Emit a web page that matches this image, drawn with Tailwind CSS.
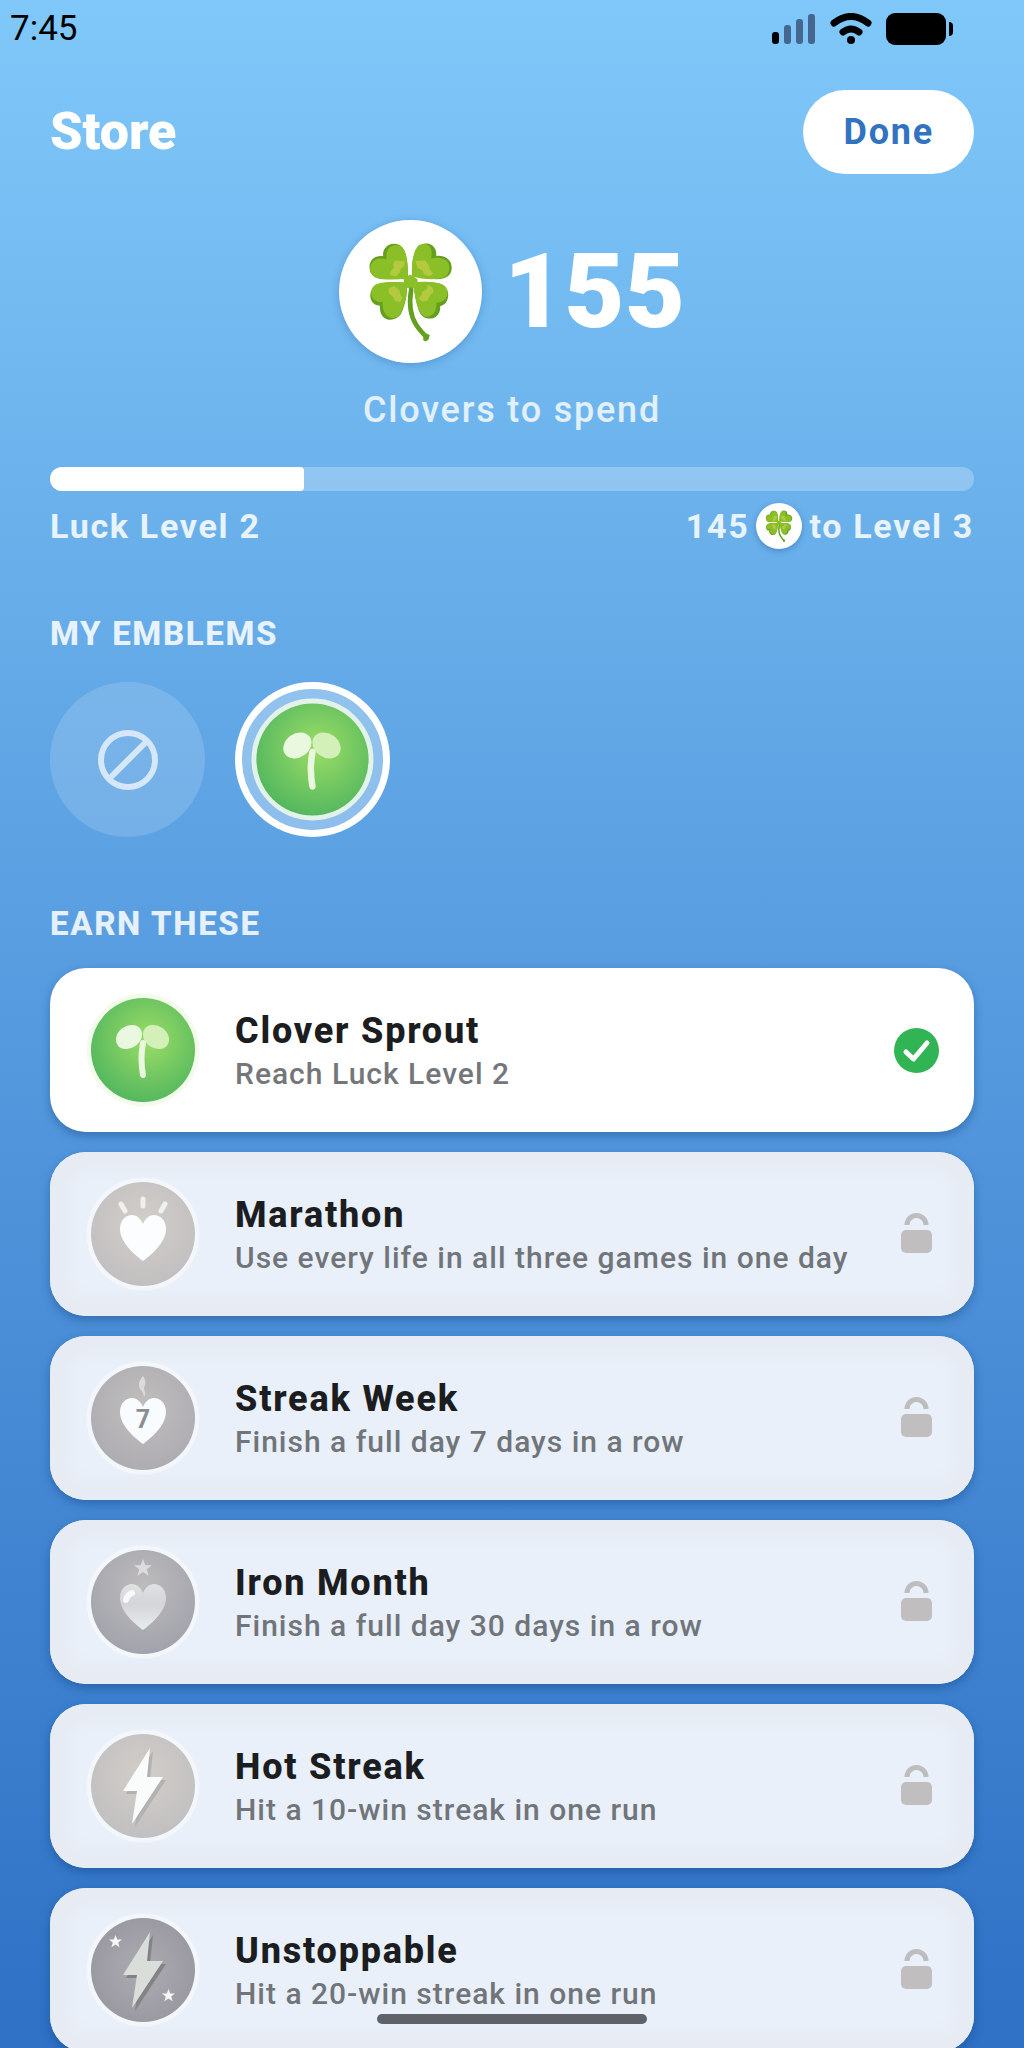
<!DOCTYPE html>
<html lang="en">
<head>
  <meta charset="UTF-8">
  <meta name="viewport" content="width=device-width, initial-scale=1">
  <title>Store</title>
  <script src="https://cdn.jsdelivr.net/npm/@tailwindcss/browser@4"></script>
</head>
<body class="h-screen overflow-hidden bg-linear-to-b from-[#80c8f9] via-[#559ade] to-[#2e71c5] font-['Roboto',sans-serif]">

  <!-- Shared icons -->
  <svg class="absolute size-0" aria-hidden="true">
    <defs>
      <radialGradient id="green" cx="0.55" cy="0.4" r="0.6">
        <stop offset="0" stop-color="#9cdd66"/><stop offset="1" stop-color="#55b85e"/>
      </radialGradient>
      <radialGradient id="sand" cx="0.5" cy="0.4" r="0.6">
        <stop offset="0" stop-color="#d2cfc9"/><stop offset="1" stop-color="#c1bfc0"/>
      </radialGradient>
      <radialGradient id="stone" cx="0.5" cy="0.4" r="0.6">
        <stop offset="0" stop-color="#c2bebd"/><stop offset="1" stop-color="#adacb1"/>
      </radialGradient>
      <radialGradient id="iron" cx="0.5" cy="0.35" r="0.65">
        <stop offset="0" stop-color="#bdbbbb"/><stop offset="1" stop-color="#a1a3ac"/>
      </radialGradient>
      <radialGradient id="slate" cx="0.5" cy="0.5" r="0.6">
        <stop offset="0" stop-color="#aeacb2"/><stop offset="1" stop-color="#96969f"/>
      </radialGradient>
      <linearGradient id="steel" x1="0" y1="0" x2="0" y2="1">
        <stop offset="0" stop-color="#dfe1e3"/><stop offset="0.45" stop-color="#d3d5d8"/><stop offset="1" stop-color="#e9edf0"/>
      </linearGradient>
    </defs>
    <symbol id="clover" viewBox="58 58 430 430">
      <g fill="#649f1f">
        <path d="M265 232C266 195 262 160 250 142C236 124 206 126 195 145C190 153 190 160 191 167C170 163 152 175 150 195C148 222 164 234 190 236Z"/>
        <path d="M278 228C275 190 282 155 298 138C315 122 342 128 349 150C351 156 351 161 350 166C375 163 396 176 397 200C397 225 382 235 350 236Z"/>
        <path d="M262 247C235 244 190 244 170 254C150 265 147 292 160 307C166 314 174 316 181 316C180 335 186 352 204 357C224 360 240 352 247 335C257 312 265 280 262 247Z"/>
        <path d="M282 247C310 243 350 244 370 254C390 266 390 290 380 305C374 313 367 316 362 317C364 335 354 350 337 354C318 357 304 347 298 330C290 308 284 280 282 247Z"/>
      </g>
      <g fill="#8abf27">
        <path d="M265 234C266 195 263 162 252 145C241 130 218 128 206 145C200 155 200 164 201 176C180 170 163 176 156 188C147 205 152 222 168 231C190 239 230 238 265 234Z"/>
        <path d="M278 228C275 190 281 155 294 138C306 125 328 127 334 144C338 155 336 164 335 174C360 167 382 175 388 190C392 205 388 222 376 230C350 239 310 237 278 228Z"/>
        <path d="M262 247C235 243 190 243 170 251C152 260 151 285 162 296C171 304 182 306 190 304C188 322 192 341 208 350C224 358 238 350 245 335C256 312 265 280 262 247Z"/>
        <path d="M282 247C310 242 350 243 370 252C388 262 388 284 378 295C370 304 358 308 351 307C352 325 346 340 332 347C318 353 306 345 299 330C290 308 284 280 282 247Z"/>
        <path d="M252 234L272 222L294 236L294 248L278 268L262 262L254 250Z"/>
      </g>
      <g fill="#b3c93f">
        <path d="M226 180L257 182L252 199L243 206L240 216L228 228L211 223L214 211L223 202L221 192Z"/>
        <path d="M288 181L318 180L330 197L331 207L342 219L330 227L313 221L309 210L294 202Z"/>
        <path d="M207 264L224 256L240 270L242 282L249 292L242 305L226 301L220 289L208 278Z"/>
        <path d="M326 253L340 262L343 274L332 284L324 300L309 304L297 294L306 284L309 273L322 266Z"/>
      </g>
      <path d="M275 268C268 310 272 345 290 373C298 386 308 397 321 410" fill="none" stroke="#63a020" stroke-width="14" stroke-linecap="round"/>
      <path d="M312 408L320 399L331 404L327 418L318 423L311 419Z" fill="#63a020"/>
    </symbol>
    <symbol id="sprout" viewBox="0 0 114 114">
      <circle cx="57" cy="57" r="54" fill="none" stroke="#f1fbe9" stroke-opacity="0.85" stroke-width="5"/>
      <circle cx="57" cy="57" r="52" fill="url(#green)"/>
      <ellipse cx="43" cy="44" rx="14" ry="11" transform="rotate(-36 43 44)" fill="#eaf8df"/>
      <ellipse cx="70" cy="44" rx="14" ry="11" transform="rotate(36 70 44)" fill="#d3f0b8"/>
      <path d="M57 50Q54 66 57 82" fill="none" stroke="#e9f8de" stroke-width="6" stroke-linecap="round"/>
    </symbol>
    <symbol id="heart" viewBox="0 0 46 46">
      <path d="M23 46C12 38 0 26 0 14C0 5 6 0 12 0C17 0 21 4 23 9C25 4 29 0 34 0C40 0 46 5 46 14C46 26 34 38 23 46Z"/>
    </symbol>
    <symbol id="star" viewBox="0 0 20 20">
      <path d="M10 0L12.600 7H20L14.200 11.500L16.300 19L10 14.500L3.700 19L5.800 11.500L0 7H7.400Z"/>
    </symbol>
    <symbol id="bolt" viewBox="0 0 40 76">
      <path d="M27 0L24 29L40 29L9 76L14 43L0 43Z"/>
    </symbol>
    <symbol id="lock" viewBox="0 0 45 45">
      <path d="M13 13A9.500 9.500 0 0 1 32 13" fill="none" stroke="#bdbdc0" stroke-width="5"/>
      <rect x="7" y="18" width="31" height="23" rx="5" fill="#c0bebf"/>
    </symbol>
  </svg>

  <div class="flex h-full flex-col">
    <!-- Status bar -->
    <div class="flex h-[58px] shrink-0 items-center justify-between pr-[70px] pl-[10px] text-black">
      <span class="text-[35px] leading-10">7:45</span>
      <div class="flex items-center gap-[14px]">
        <svg class="h-8 w-11" viewBox="0 0 44 32" aria-hidden="true">
          <rect x="0" y="19" width="7" height="12" rx="3"/>
          <g fill="#45678f">
            <rect x="12" y="12" width="7" height="19" rx="3"/>
            <rect x="24" y="6" width="7" height="25" rx="3"/>
            <rect x="36" y="1" width="7" height="30" rx="3"/>
          </g>
        </svg>
        <svg class="h-8 w-[42px]" viewBox="0 0 42 32" fill="none" stroke="#000" stroke-width="7" stroke-linecap="round" aria-hidden="true">
          <path d="M4 10Q21 -3 38 10"/>
          <path d="M13 19Q21 13 29 19"/>
          <circle cx="21" cy="27" r="4" fill="#000" stroke="none"/>
        </svg>
        <svg class="h-8 w-[68px]" viewBox="0 0 68 32" aria-hidden="true">
          <rect x="0" y="0" width="60" height="32" rx="9"/>
          <path d="M63 9Q67 9 67 13V19Q67 23 63 23Z"/>
        </svg>
      </div>
    </div>

    <main class="flex min-h-0 flex-1 flex-col px-[50px] pt-8">
      <header class="flex shrink-0 items-center justify-between">
        <h1 class="text-[52px] leading-[60px] font-black text-white">Store</h1>
        <button type="button" class="h-[84px] rounded-full bg-white px-10 text-[36px] font-bold tracking-wider text-[#3173c0]">Done</button>
      </header>

      <!-- Balance -->
      <section class="mt-[46px] flex shrink-0 flex-col items-center">
        <div class="flex items-center gap-[22px]">
          <div class="size-[143px] rounded-full bg-white shadow-[0_2px_8px_rgba(30,80,150,0.3)]">
            <svg class="size-full" role="img" aria-label="Clover"><use href="#clover"/></svg>
          </div>
          <span class="text-[104px] leading-[112px] font-black text-white">155</span>
        </div>
        <p class="mt-6 text-[36px] leading-[46px] font-medium tracking-wider text-white/80">Clovers to spend</p>
      </section>

      <section class="mt-[34px] shrink-0">
        <div class="h-6 overflow-hidden rounded-xl bg-white/25" role="progressbar" aria-label="Luck level progress" aria-valuemin="0" aria-valuemax="100" aria-valuenow="28">
          <div class="h-full rounded-r bg-white" style="width: 27.5%"></div>
        </div>
        <div class="mt-3 flex items-center justify-between text-[34px] leading-[46px] font-bold tracking-wider text-white/85">
          <span>Luck Level 2</span>
          <span class="flex items-center gap-[7px]">
            145
            <span class="size-[46px] rounded-full bg-white shadow-[0_2px_6px_rgba(30,80,150,0.4)]">
              <svg class="size-full" role="img" aria-label="clovers"><use href="#clover"/></svg>
            </span>
            to Level 3
          </span>
        </div>
      </section>

      <section class="mt-[65px] shrink-0">
        <h2 class="text-[33px] leading-10 font-extrabold tracking-wider text-white/85">MY EMBLEMS</h2>
        <div class="mt-7 flex gap-[30px]">
          <button type="button" aria-label="No emblem" class="flex size-[155px] items-center justify-center rounded-full bg-white/15">
            <svg class="size-[60px]" viewBox="0 0 60 60" fill="none" stroke="#d5e7f8" stroke-width="6" stroke-linecap="round">
              <circle cx="30" cy="30" r="27"/>
              <path d="M12 48L48 12"/>
            </svg>
          </button>
          <button type="button" aria-label="Clover Sprout" aria-pressed="true" class="flex size-[155px] items-center justify-center rounded-full border-7 border-white bg-white/30">
            <svg class="size-[123px]"><use href="#sprout"/></svg>
          </button>
        </div>
      </section>

      <section class="mt-[67px] shrink-0">
        <h2 class="text-[33px] leading-10 font-extrabold tracking-wider text-white/85">EARN THESE</h2>
        <ul class="mt-6 flex flex-col gap-5">
          <li class="flex h-[164px] items-center gap-[35px] rounded-[36px] bg-white pr-[35px] pl-9 shadow-[0_4px_10px_rgba(10,50,110,0.35)]">
            <svg class="size-[114px] shrink-0"><use href="#sprout"/></svg>
            <div class="flex-1">
              <h3 class="text-[36px] leading-12 font-extrabold tracking-wider text-[#1c1d20]">Clover Sprout</h3>
              <p class="text-[30px] leading-[38px] font-medium tracking-[1px] text-[#747679]">Reach Luck Level 2</p>
            </div>
            <svg class="size-[45px] shrink-0" viewBox="0 0 45 45" role="img" aria-label="Earned">
              <circle cx="22.500" cy="22.500" r="22.500" fill="#31b454"/>
              <path d="M12 24L19.500 31L33 15" fill="none" stroke="#fff" stroke-width="5" stroke-linecap="round" stroke-linejoin="round"/>
            </svg>
          </li>

          <li class="flex h-[164px] items-center gap-[35px] rounded-[36px] bg-[#e9f0fa] pr-[35px] pl-9 shadow-[inset_0_0_12px_22px_#e7ecf4,0_4px_10px_rgba(10,50,110,0.35)]">
            <svg class="size-[114px] shrink-0" viewBox="0 0 114 114">
              <circle cx="57" cy="57" r="54" fill="none" stroke="#f3f6fb" stroke-width="5"/>
              <circle cx="57" cy="57" r="52" fill="url(#sand)"/>
              <use href="#heart" x="34" y="38" width="46" height="46" fill="#fbfdfe"/>
              <path d="M35 27L39 34M57 22V29M79 27L75 34" stroke="#f0f0ef" stroke-width="5" stroke-linecap="round"/>
            </svg>
            <div class="flex-1">
              <h3 class="text-[36px] leading-12 font-extrabold tracking-wider text-[#1c1d20]">Marathon</h3>
              <p class="text-[30px] leading-[38px] font-medium tracking-[1px] text-[#717579]">Use every life in all three games in one day</p>
            </div>
            <svg class="size-[45px] shrink-0" role="img" aria-label="Locked"><use href="#lock"/></svg>
          </li>

          <li class="flex h-[164px] items-center gap-[35px] rounded-[36px] bg-[#e9f0fa] pr-[35px] pl-9 shadow-[inset_0_0_12px_22px_#e7ecf4,0_4px_10px_rgba(10,50,110,0.35)]">
            <svg class="size-[114px] shrink-0" viewBox="0 0 114 114">
              <circle cx="57" cy="57" r="54" fill="none" stroke="#f3f6fb" stroke-width="5"/>
              <circle cx="57" cy="57" r="52" fill="url(#stone)"/>
              <path d="M57 15C52 20 52 26 55 29C57 32 58 34 58 36C61 32 58 30 58 27C60 23 60 19 57 15Z" fill="#dcdbda"/>
              <use href="#heart" x="34" y="37" width="46" height="46" fill="#f9fcfe"/>
              <text x="57" y="67" text-anchor="middle" font-size="25" font-weight="700" fill="#8b8d91">7</text>
            </svg>
            <div class="flex-1">
              <h3 class="text-[36px] leading-12 font-extrabold tracking-wider text-[#1c1d20]">Streak Week</h3>
              <p class="text-[30px] leading-[38px] font-medium tracking-[1px] text-[#717579]">Finish a full day 7 days in a row</p>
            </div>
            <svg class="size-[45px] shrink-0" role="img" aria-label="Locked"><use href="#lock"/></svg>
          </li>

          <li class="flex h-[164px] items-center gap-[35px] rounded-[36px] bg-[#e9f0fa] pr-[35px] pl-9 shadow-[inset_0_0_12px_22px_#e7ecf4,0_4px_10px_rgba(10,50,110,0.35)]">
            <svg class="size-[114px] shrink-0" viewBox="0 0 114 114">
              <circle cx="57" cy="57" r="54" fill="none" stroke="#f3f6fb" stroke-width="5"/>
              <circle cx="57" cy="57" r="52" fill="url(#iron)"/>
              <use href="#star" x="48" y="14" width="18" height="18" fill="#dcdcdd"/>
              <use href="#heart" x="34" y="39" width="46" height="46" fill="url(#steel)"/>
              <path d="M40 55Q41 50 46 48" fill="none" stroke="#f7f9fb" stroke-width="6" stroke-linecap="round"/>
            </svg>
            <div class="flex-1">
              <h3 class="text-[36px] leading-12 font-extrabold tracking-wider text-[#1c1d20]">Iron Month</h3>
              <p class="text-[30px] leading-[38px] font-medium tracking-[1px] text-[#717579]">Finish a full day 30 days in a row</p>
            </div>
            <svg class="size-[45px] shrink-0" role="img" aria-label="Locked"><use href="#lock"/></svg>
          </li>

          <li class="flex h-[164px] items-center gap-[35px] rounded-[36px] bg-[#e9f0fa] pr-[35px] pl-9 shadow-[inset_0_0_12px_22px_#e7ecf4,0_4px_10px_rgba(10,50,110,0.35)]">
            <svg class="size-[114px] shrink-0" viewBox="0 0 114 114">
              <circle cx="57" cy="57" r="54" fill="none" stroke="#f3f6fb" stroke-width="5"/>
              <circle cx="57" cy="57" r="52" fill="url(#sand)"/>
              <use href="#bolt" x="40" y="22" width="40" height="76" fill="#b3b1b1"/>
              <use href="#bolt" x="37" y="19" width="40" height="76" fill="#fafcfc"/>
            </svg>
            <div class="flex-1">
              <h3 class="text-[36px] leading-12 font-extrabold tracking-wider text-[#1c1d20]">Hot Streak</h3>
              <p class="text-[30px] leading-[38px] font-medium tracking-[1px] text-[#717579]">Hit a 10-win streak in one run</p>
            </div>
            <svg class="size-[45px] shrink-0" role="img" aria-label="Locked"><use href="#lock"/></svg>
          </li>

          <li class="flex h-[164px] items-center gap-[35px] rounded-[36px] bg-[#e9f0fa] pr-[35px] pl-9 shadow-[inset_0_0_12px_22px_#e7ecf4,0_4px_10px_rgba(10,50,110,0.35)]">
            <svg class="size-[114px] shrink-0" viewBox="0 0 114 114">
              <circle cx="57" cy="57" r="54" fill="none" stroke="#f3f6fb" stroke-width="5"/>
              <circle cx="57" cy="57" r="52" fill="url(#slate)"/>
              <use href="#bolt" x="40" y="22" width="40" height="76" fill="#838387"/>
              <use href="#bolt" x="37" y="19" width="40" height="76" fill="#dadedb"/>
              <use href="#star" x="23" y="22" width="13" height="13" fill="#f6f7f9"/>
              <use href="#star" x="76" y="76" width="13" height="13" fill="#f6f7f9"/>
            </svg>
            <div class="flex-1">
              <h3 class="text-[36px] leading-12 font-extrabold tracking-wider text-[#1c1d20]">Unstoppable</h3>
              <p class="text-[30px] leading-[38px] font-medium tracking-[1px] text-[#717579]">Hit a 20-win streak in one run</p>
            </div>
            <svg class="size-[45px] shrink-0" role="img" aria-label="Locked"><use href="#lock"/></svg>
          </li>
        </ul>
      </section>
    </main>
  </div>

  <!-- Home indicator -->
  <div class="fixed bottom-6 left-1/2 h-[10px] w-[270px] -translate-x-1/2 rounded-full bg-[#5f6369]"></div>

</body>
</html>
